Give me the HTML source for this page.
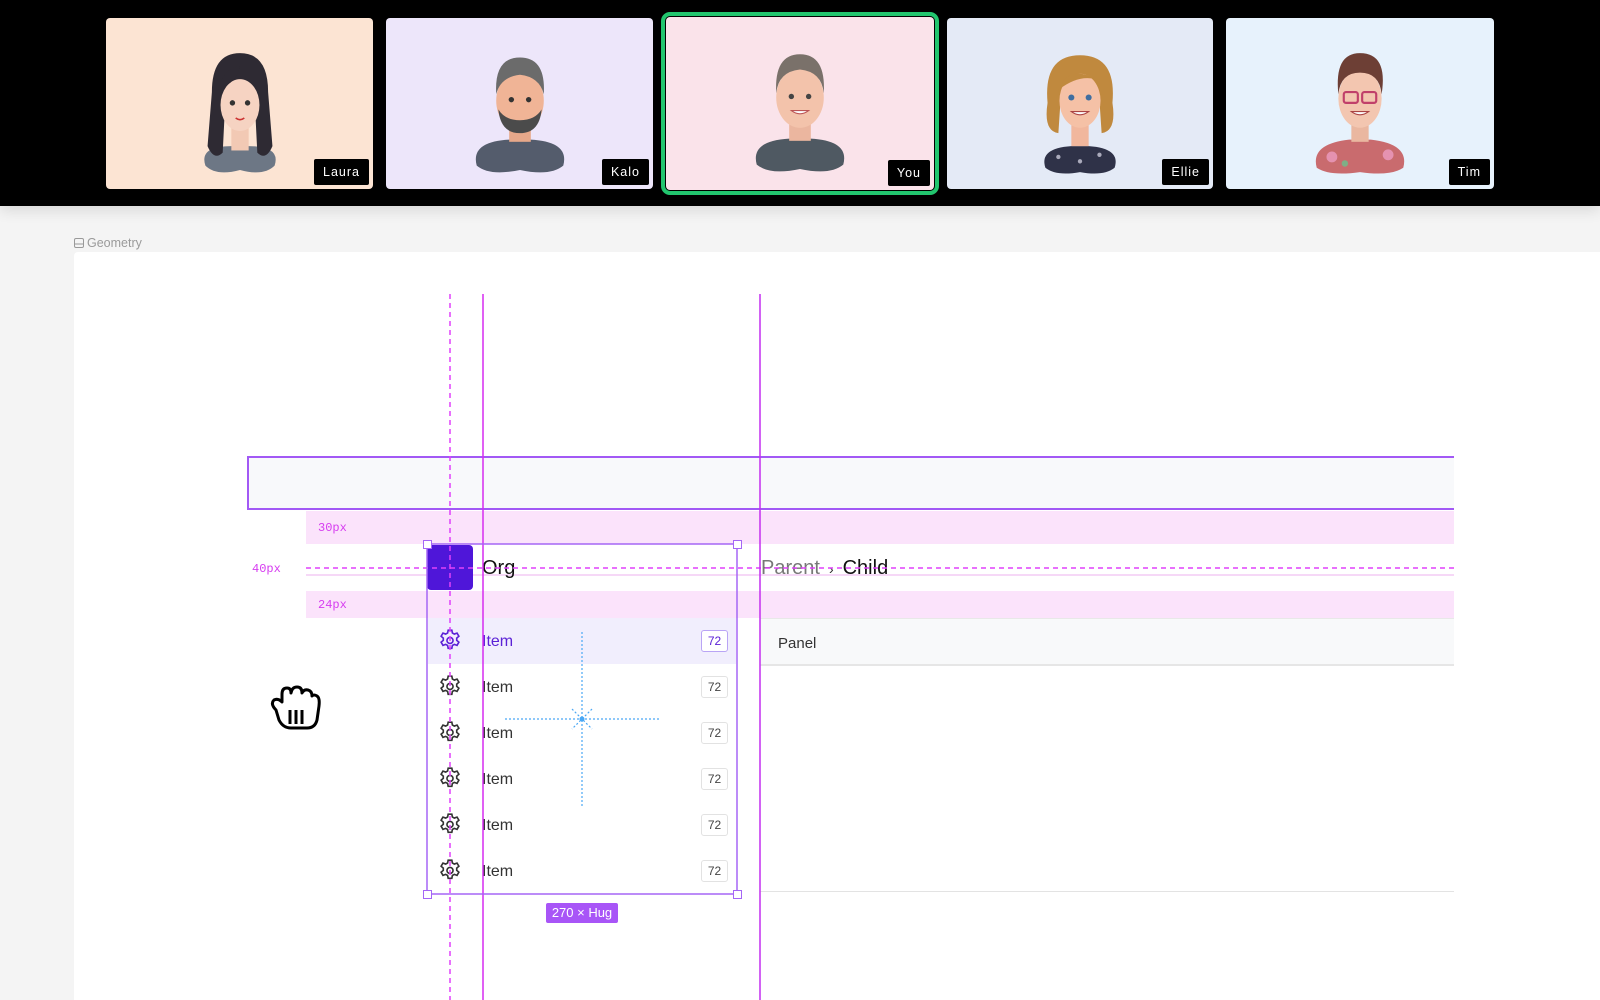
<!DOCTYPE html>
<html><head><meta charset="utf-8"><style>
*{margin:0;padding:0;box-sizing:border-box}
body{width:1600px;height:1000px;overflow:hidden;background:#f4f4f4;font-family:"Liberation Sans",sans-serif;position:relative}
.abs{position:absolute}
.bar{left:0;top:0;width:1600px;height:206px;background:#000;box-shadow:0 4px 14px rgba(0,0,0,.12)}
.tile{position:absolute;top:18px;height:171px;border-radius:4px;overflow:hidden}
.lbl{position:absolute;right:4px;bottom:4px;background:#000;color:#fff;font-size:12.5px;letter-spacing:1px;padding:6px 9px;border-radius:2px}
.av{position:absolute;left:50%;top:20px;margin-left:-65px}
.mono{font-family:"Liberation Mono",monospace;font-size:12px;color:#d63cf0}
.item{position:absolute;left:428px;width:308px;height:46px}
.item .t{position:absolute;left:54px;top:15px;font-size:16px;color:#333}
.item .b{position:absolute;left:273px;top:12px;width:27px;height:22px;border:1px solid #e2e2e2;border-radius:3px;font-size:12px;text-align:center;line-height:20px;color:#444;background:#fff}
.item svg{position:absolute;left:9px;top:10px}
.h{position:absolute;width:9px;height:9px;border:1.5px solid #a566f5;background:#fff}
</style></head><body>
<div class="abs bar"></div>
<div class="abs" style="left:661px;top:12px;width:278px;height:183px;border:4px solid #22c56e;border-radius:9px"></div>

<div class="tile" style="left:106px;width:267px;background:#fce4d3">
<svg class="av" width="130" height="146" viewBox="0 0 120 135"><path d="M28 118 q-6 -18 24 -18 h16 q30 0 24 18 q-10 10 -32 4 q-22 6 -32 -4z" fill="#6d7785"/><rect x="52" y="82" width="16" height="22" fill="#f2c9b4"/><path d="M34 50 q0 -36 26 -36 q26 0 26 36 l4 50 q-6 14 -14 6 l-2 -40 h-28 l-2 40 q-8 8 -14 -6z" fill="#2e2a33"/><ellipse cx="60" cy="62" rx="18" ry="24" fill="#f6d3c2"/><path d="M40 48 q4 -20 20 -22 q-2 14 -20 22z" fill="#2e2a33"/><circle cx="53" cy="60" r="2.5" fill="#333"/><circle cx="67" cy="60" r="2.5" fill="#333"/><path d="M56 74 q4 3 8 0" stroke="#c33" stroke-width="1.5" fill="none"/></svg>
<div class="lbl">Laura</div></div>

<div class="tile" style="left:386px;width:267px;background:#ede6fa">
<svg class="av" width="130" height="146" viewBox="0 0 120 135"><path d="M20 118 q-6 -22 30 -24 h20 q36 2 30 24 q-12 10 -40 4 q-28 6 -40 -4z" fill="#545c6c"/><rect x="50" y="80" width="20" height="16" fill="#e7a88a"/><ellipse cx="60" cy="58" rx="22" ry="28" fill="#f0b496"/><path d="M38 52 q-2 -34 22 -34 q24 0 22 34 q-4 -16 -22 -18 q-18 2 -22 18z" fill="#6b6b6b"/><path d="M40 66 q2 22 20 22 q18 0 20 -22 q-6 10 -20 10 q-14 0 -20 -10z" fill="#4b4b4b"/><circle cx="52" cy="57" r="2.5" fill="#333"/><circle cx="68" cy="57" r="2.5" fill="#333"/></svg>
<div class="lbl">Kalo</div></div>

<div class="tile" style="left:666px;width:268px;top:17px;height:173px;background:#fae3ea">
<svg class="av" width="130" height="146" viewBox="0 0 120 135"><path d="M20 118 q-6 -22 30 -24 h20 q36 2 30 24 q-12 10 -40 4 q-28 6 -40 -4z" fill="#4f5962"/><rect x="50" y="78" width="20" height="18" fill="#ebb69f"/><ellipse cx="60" cy="56" rx="22" ry="28" fill="#f3c3ab"/><path d="M38 52 q-2 -36 22 -36 q24 0 22 36 q-2 -20 -22 -22 q-20 2 -22 22z" fill="#7a716a"/><circle cx="52" cy="55" r="2.5" fill="#444"/><circle cx="68" cy="55" r="2.5" fill="#444"/><path d="M52 68 q8 6 16 0z" fill="#fff" stroke="#b55" stroke-width="1"/></svg>
<div class="lbl">You</div></div>

<div class="tile" style="left:947px;width:266px;background:#e4eaf6">
<svg class="av" width="130" height="146" viewBox="0 0 120 135"><path d="M28 120 q-6 -18 24 -20 h16 q30 2 24 20 q-10 8 -32 4 q-22 4 -32 -4z" fill="#2f3248"/><circle cx="40" cy="110" r="2" fill="#aab"/><circle cx="60" cy="114" r="2" fill="#aab"/><circle cx="78" cy="108" r="2" fill="#aab"/><rect x="52" y="80" width="16" height="20" fill="#f1b79d"/><path d="M30 60 q-4 -44 30 -44 q34 0 30 44 q4 26 -10 28 l-2 -30 h-36 l-2 30 q-14 -2 -10 -28z" fill="#c0893e"/><ellipse cx="60" cy="58" rx="19" ry="25" fill="#f5c1a6"/><path d="M40 48 q10 -24 34 -10 q-16 -4 -34 10z" fill="#c0893e"/><circle cx="52" cy="55" r="2.8" fill="#3f6ea0"/><circle cx="68" cy="55" r="2.8" fill="#3f6ea0"/><path d="M52 68 q8 6 16 0z" fill="#fff" stroke="#a44" stroke-width="1"/></svg>
<div class="lbl">Ellie</div></div>

<div class="tile" style="left:1226px;width:268px;background:#e7f2fc">
<svg class="av" width="130" height="146" viewBox="0 0 120 135"><path d="M20 120 q-6 -22 30 -26 h20 q36 4 30 26 q-12 8 -40 4 q-28 4 -40 -4z" fill="#c96b6e"/><circle cx="34" cy="110" r="5" fill="#e592b0"/><circle cx="86" cy="108" r="5" fill="#e592b0"/><circle cx="46" cy="116" r="3" fill="#7fae86"/><rect x="52" y="78" width="16" height="18" fill="#eab7a0"/><ellipse cx="60" cy="56" rx="20" ry="27" fill="#f3c6b0"/><path d="M40 52 q-4 -38 20 -38 q26 0 20 38 q-2 -20 -20 -20 q-18 0 -20 20z" fill="#6d3f35"/><rect x="45" y="50" width="13" height="10" rx="2" fill="none" stroke="#c0406a" stroke-width="2"/><rect x="62" y="50" width="13" height="10" rx="2" fill="none" stroke="#c0406a" stroke-width="2"/><path d="M52 68 q8 6 16 0z" fill="#fff" stroke="#a44" stroke-width="1"/></svg>
<div class="lbl">Tim</div></div>

<div class="abs" style="left:74px;top:236px;font-size:12.5px;color:#9a9a9a">
<svg width="10" height="10" style="vertical-align:-1px;margin-right:3px"><rect x="0.5" y="0.5" width="9" height="9" rx="1.5" fill="none" stroke="#999"/><line x1="0.5" y1="6" x2="9.5" y2="6" stroke="#999"/></svg>Geometry</div>
<div class="abs" style="left:74px;top:252px;width:1526px;height:748px;background:#fff;border-radius:4px 0 0 0"></div>

<div class="abs" style="left:247px;top:456px;width:1207px;height:54px;border:2.5px solid #a259f5;border-right:none;background:#f8f9fb"></div>
<div class="abs" style="left:306px;top:511px;width:1148px;height:33px;background:#fbe3fb"></div>
<div class="abs mono" style="left:318px;top:521px">30px</div>
<div class="abs" style="left:306px;top:574px;width:1148px;height:2px;background:#f6d8f7"></div>
<div class="abs" style="left:306px;top:591px;width:1148px;height:27px;background:#fbe3fb"></div>
<div class="abs mono" style="left:318px;top:598px">24px</div>
<div class="abs mono" style="left:252px;top:562px">40px</div>

<div class="abs" style="left:760px;top:618px;width:694px;height:48px;background:#f8f9fa;border-top:1px solid #e8e8e8;border-bottom:2px solid #e6e6e6"></div>
<div class="abs" style="left:778px;top:635px;font-size:15px;color:#333">Panel</div>
<div class="abs" style="left:760px;top:891px;width:694px;height:1px;background:#e3e3e3"></div>

<div class="abs" style="left:427px;top:545px;width:46px;height:45px;background:#4f16d9;border-radius:4px"></div>
<div class="abs" style="left:482px;top:557px;font-size:20px;color:#111">Org</div>
<div class="abs" style="left:761px;top:557px;font-size:20px;color:#777">Parent<span style="color:#333;font-size:14px;margin:0 9px">&#8250;</span><span style="color:#111">Child</span></div>

<div class="abs" style="left:428px;top:618px;width:308px;height:46px;background:#f1eefd"></div>
<svg width="0" height="0" style="position:absolute"><defs><path id="g" d="M10.3 2h3.4l.5 2.6 1.8 1 2.5-.9 1.7 2.9-2 1.7v2.1l2 1.7-1.7 2.9-2.5-.9-1.8 1-.5 2.6h-3.4l-.5-2.6-1.8-1-2.5.9-1.7-2.9 2-1.7V9.3L3.8 7.6l1.7-2.9 2.5.9 1.8-1z"/></defs></svg>
<div class="item" style="top:618px"><svg width="26" height="26" viewBox="0 0 24 24" fill="none" stroke="#5b21d6" stroke-width="1.5"><use href="#g"/><circle cx="12" cy="11.5" r="2.8"/></svg><div class="t" style="color:#5b21d6">Item</div><div class="b" style="border-color:#b9a4f5;color:#5b21d6">72</div></div>
<div class="item" style="top:664px"><svg width="26" height="26" viewBox="0 0 24 24" fill="none" stroke="#333" stroke-width="1.5"><use href="#g"/><circle cx="12" cy="11.5" r="2.8"/></svg><div class="t">Item</div><div class="b">72</div></div>
<div class="item" style="top:710px"><svg width="26" height="26" viewBox="0 0 24 24" fill="none" stroke="#333" stroke-width="1.5"><use href="#g"/><circle cx="12" cy="11.5" r="2.8"/></svg><div class="t">Item</div><div class="b">72</div></div>
<div class="item" style="top:756px"><svg width="26" height="26" viewBox="0 0 24 24" fill="none" stroke="#333" stroke-width="1.5"><use href="#g"/><circle cx="12" cy="11.5" r="2.8"/></svg><div class="t">Item</div><div class="b">72</div></div>
<div class="item" style="top:802px"><svg width="26" height="26" viewBox="0 0 24 24" fill="none" stroke="#333" stroke-width="1.5"><use href="#g"/><circle cx="12" cy="11.5" r="2.8"/></svg><div class="t">Item</div><div class="b">72</div></div>
<div class="item" style="top:848px"><svg width="26" height="26" viewBox="0 0 24 24" fill="none" stroke="#333" stroke-width="1.5"><use href="#g"/><circle cx="12" cy="11.5" r="2.8"/></svg><div class="t">Item</div><div class="b">72</div></div>

<svg class="abs" style="left:0;top:0" width="1600" height="1000">
<line x1="306" y1="568" x2="1454" y2="568" stroke="#e040fb" stroke-width="1.5" stroke-dasharray="5 4"/>
<line x1="450" y1="294" x2="450" y2="1000" stroke="#e040fb" stroke-width="1.5" stroke-dasharray="5 4"/>
<line x1="483" y1="294" x2="483" y2="1000" stroke="#d62cf0" stroke-width="1.5"/>
<line x1="760" y1="294" x2="760" y2="1000" stroke="#c42ef0" stroke-width="1.5"/>
<rect x="427" y="544" width="310" height="350" fill="none" stroke="#a566f5" stroke-width="1.5"/>
<g stroke="#4aa8f5" stroke-width="1.2" stroke-dasharray="2 2">
<line x1="582" y1="632" x2="582" y2="806"/><line x1="505" y1="719" x2="660" y2="719"/>
<line x1="572" y1="709" x2="592" y2="729"/><line x1="592" y1="709" x2="572" y2="729"/></g>
<circle cx="582" cy="719" r="2.5" fill="#4aa8f5"/>
</svg>
<div class="h" style="left:423px;top:540px"></div><div class="h" style="left:733px;top:540px"></div>
<div class="h" style="left:423px;top:890px"></div><div class="h" style="left:733px;top:890px"></div>
<div class="abs" style="left:546px;top:903px;width:72px;height:20px;background:#a855f7;color:#fff;font-size:13px;text-align:center;line-height:20px;border-radius:2px">270 × Hug</div>

<svg class="abs" style="left:266px;top:682px" width="56" height="52" viewBox="0 0 56 52">
<path d="M10 28 q-6 -6 -2 -10 q4 -2 8 2 l0 -8 q0 -6 5 -6 q4 0 4 5 q1 -6 6 -6 q5 0 5 6 q2 -4 6 -3 q4 1 4 6 q2 -2 5 0 q3 2 2 10 l-2 14 q-2 8 -10 8 h-16 q-8 0 -12 -8z" fill="#fff" stroke="#000" stroke-width="3" stroke-linejoin="round"/>
<line x1="24" y1="28" x2="24" y2="42" stroke="#000" stroke-width="3"/><line x1="30" y1="28" x2="30" y2="42" stroke="#000" stroke-width="3"/><line x1="36" y1="28" x2="36" y2="42" stroke="#000" stroke-width="3"/>
</svg>
</body></html>
